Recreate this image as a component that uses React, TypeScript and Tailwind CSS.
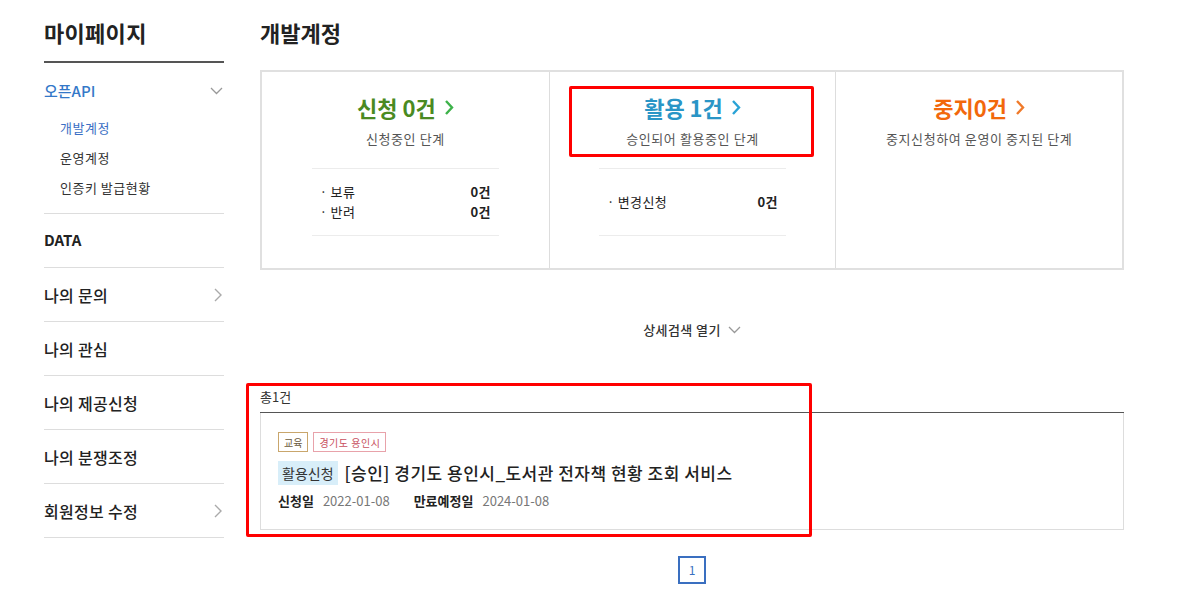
import { ReactNode } from "react";

const font = "font-['Noto_Sans_CJK_KR','Noto_Sans',sans-serif]";

function ChevronRight({ className = "" }: { className?: string }) {
  return (
    <svg width="8" height="14" viewBox="0 0 8 14" className={className} fill="none">
      <polyline points="1,1 7,7 1,13" stroke="currentColor" strokeWidth="1.4" />
    </svg>
  );
}

function ChevronDown({ className = "" }: { className?: string }) {
  return (
    <svg width="13" height="8" viewBox="0 0 13 8" className={className} fill="none">
      <polyline points="1,1 6.5,6.5 12,1" stroke="currentColor" strokeWidth="1.3" />
    </svg>
  );
}

function TitleArrow({ className = "" }: { className?: string }) {
  return (
    <svg width="10" height="17" viewBox="0 0 10 17" className={className} fill="none">
      <polyline points="2,2 8,8.5 2,15" stroke="currentColor" strokeWidth="2.4" />
    </svg>
  );
}

const menu = [
  { label: "나의 문의", arrow: true },
  { label: "나의 관심", arrow: false },
  { label: "나의 제공신청", arrow: false },
  { label: "나의 분쟁조정", arrow: false },
  { label: "회원정보 수정", arrow: true },
];

function Sidebar() {
  return (
    <aside className="w-[180px] shrink-0">
      <h1 className="pt-[17px] pb-[14px] text-[22px] leading-[30px] font-bold tracking-[0.3px] text-[#222] border-b-2 border-[#555]">
        마이페이지
      </h1>
      <div className="pt-[16px] pb-[10px] border-b border-[#ddd]">
        <div className="flex items-center justify-between h-[24px]">
          <span className="text-[15px] font-medium text-[#3478c8]">오픈API</span>
          <ChevronDown className="text-[#999] mr-[1px]" />
        </div>
        <ul className="mt-[10px] pl-[16px] text-[13px] tracking-[0.5px] text-[#333]">
          <li className="leading-[30px] text-[#3b6fc4]">개발계정</li>
          <li className="leading-[30px]">운영계정</li>
          <li className="leading-[30px]">인증키 발급현황</li>
        </ul>
      </div>
      <div className="h-[54px] flex items-center border-b border-[#ddd] text-[15px] font-bold text-[#222]">
        DATA
      </div>
      {menu.map((m) => (
        <div
          key={m.label}
          className="h-[54px] flex items-center justify-between border-b border-[#ddd] text-[16px] tracking-[0.3px] font-medium text-[#222]"
        >
          <span>{m.label}</span>
          {m.arrow && <ChevronRight className="text-[#aaa] mr-[2px]" />}
        </div>
      ))}
    </aside>
  );
}

function Row({ label, value }: { label: string; value: string }) {
  return (
    <div className="flex items-center justify-between px-[8px] text-[13px] leading-[20px] tracking-[0.4px] text-[#222]">
      <span>
        <span className="mr-[3px]">·</span>
        {label}
      </span>
      <span className="font-bold">{value}</span>
    </div>
  );
}

function Stage({
  title,
  titleColor,
  arrowColor,
  desc,
  children,
  highlight,
  bordered,
}: {
  title: string;
  titleColor: string;
  arrowColor: string;
  desc: string;
  children?: ReactNode;
  highlight?: boolean;
  bordered?: boolean;
}) {
  return (
    <div className={`relative flex flex-col items-center pt-[21px] ${bordered ? "border-l border-[#ddd]" : ""}`}>
      <div className={`flex items-center gap-[8px] text-[22px] leading-[28px] font-bold ${titleColor}`}>
        <span>{title}</span>
        <TitleArrow className={arrowColor} />
      </div>
      <p className="mt-[8px] text-[13px] leading-[20px] tracking-[0.6px] text-[#555]">{desc}</p>
      {children && (
        <div className="mt-[19px] w-[187px] h-[68px] flex flex-col justify-center border-y border-[#ececec]">
          {children}
        </div>
      )}
      {highlight && (
        <div className="absolute left-[19px] top-[14px] w-[245px] h-[71px] border-[3px] border-[#ff0000] rounded-[2px]" />
      )}
    </div>
  );
}

export default function App() {
  return (
    <div className={`${font} bg-white w-[1192px] min-h-[597px] flex gap-[36px] pl-[44px]`}>
      <Sidebar />
      <main className="w-[864px] pt-[18px]">
        <h2 className="text-[22px] leading-[28px] font-bold text-[#222]">개발계정</h2>

        <section className="mt-[24px] h-[200px] border-2 border-[#e0e0e0] grid grid-cols-3">
          <Stage
            title="신청 0건"
            titleColor="text-[#4a8a22]"
            arrowColor="text-[#3db24a]"
            desc="신청중인 단계"
          >
            <Row label="보류" value="0건" />
            <Row label="반려" value="0건" />
          </Stage>
          <Stage
            title="활용 1건"
            titleColor="text-[#2a95c6]"
            arrowColor="text-[#2aa3d6]"
            desc="승인되어 활용중인 단계"
            highlight
            bordered
          >
            <Row label="변경신청" value="0건" />
          </Stage>
          <Stage
            title="중지0건"
            titleColor="text-[#f2680c]"
            arrowColor="text-[#f07a2a]"
            desc="중지신청하여 운영이 중지된 단계"
            bordered
          />
        </section>

        <div className="mt-[50px] flex items-center justify-center gap-[7px] text-[13px] leading-[20px] tracking-[0.4px] font-medium text-[#333]">
          <span>상세검색 열기</span>
          <ChevronDown className="text-[#999]" />
        </div>

        <section className="relative mt-[47px]">
          <p className="text-[13px] leading-[20px] text-[#333] pb-[5px]">총1건</p>
          <div className="border-t border-[#555]">
            <div className="border-x border-b border-[#ddd] pl-[17px] pt-[19px] pb-[18px]">
              <div className="flex gap-[5px]">
                <span className="h-[20px] px-[5px] flex items-center border border-[#c9a66c] text-[10px] text-[#6b5a3a]">
                  교육
                </span>
                <span className="h-[20px] px-[5px] flex items-center border border-[#e8a2aa] text-[10px] tracking-[0.5px] text-[#c8505e]">
                  경기도 용인시
                </span>
              </div>
              <div className="mt-[8px] flex items-center gap-[7px] h-[26px]">
                <span className="h-[24px] px-[4px] flex items-center bg-[#d8eef9] text-[14px] text-[#333]">
                  활용신청
                </span>
                <span className="text-[17px] leading-[26px] tracking-[0.5px] font-medium text-[#222]">
                  [승인] 경기도 용인시_도서관 전자책 현황 조회 서비스
                </span>
              </div>
              <div className="mt-[5px] flex items-center text-[13px] leading-[20px]">
                <span className="font-bold text-[#222]">신청일</span>
                <span className="ml-[9px] text-[#777]">2022-01-08</span>
                <span className="ml-[24px] font-bold text-[#222]">만료예정일</span>
                <span className="ml-[9px] text-[#777]">2024-01-08</span>
              </div>
            </div>
          </div>
          <div className="absolute -left-[14px] -top-[4px] w-[566px] h-[154px] border-[3px] border-[#ff0000] rounded-[2px]" />
        </section>

        <nav className="mt-[26px] flex justify-center">
          <span className="w-[28px] h-[28px] flex items-center justify-center border-2 border-[#3a6fc0] text-[12px] text-[#3a6fc0]">
            1
          </span>
        </nav>
      </main>
    </div>
  );
}
